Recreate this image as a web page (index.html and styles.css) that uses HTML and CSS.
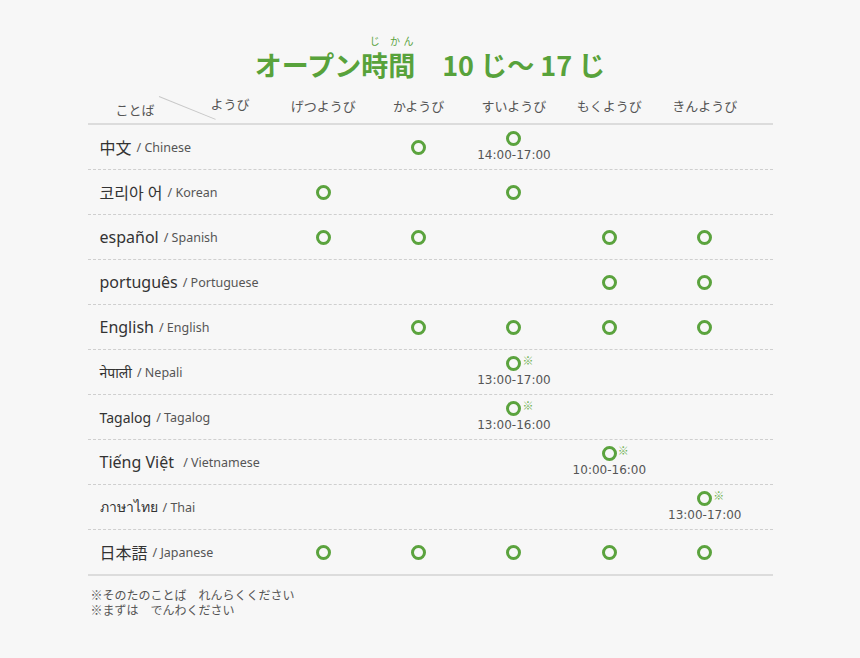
FILE: index.html
```html
<!DOCTYPE html>
<html lang="ja">
<head>
<meta charset="utf-8">
<title>オープン時間</title>
<link rel="stylesheet" href="styles.css">
</head>
<body>
<div class="page">
  <h1 class="title">オープン<ruby>時<rt>じ</rt></ruby><ruby>間<rt>かん</rt></ruby>　10 じ～ 17 じ</h1>
  <div class="table">
    <div class="row head">
      <div class="corner"><span class="c-lang">ことば</span><span class="c-line"></span><span class="c-day">ようび</span></div>
      <div class="hd">げつようび</div>
      <div class="hd">かようび</div>
      <div class="hd">すいようび</div>
      <div class="hd">もくようび</div>
      <div class="hd">きんようび</div>
    </div>

    <div class="row">
      <div class="lang"><span class="name">中文</span><span class="en">/ Chinese</span></div>
      <div class="cell"></div>
      <div class="cell"><span class="ring"></span></div>
      <div class="cell"><span class="ring"></span><span class="time">14:00-17:00</span></div>
      <div class="cell"></div>
      <div class="cell"></div>
    </div>

    <div class="row">
      <div class="lang"><span class="name">코리아 어</span><span class="en">/ Korean</span></div>
      <div class="cell"><span class="ring"></span></div>
      <div class="cell"></div>
      <div class="cell"><span class="ring"></span></div>
      <div class="cell"></div>
      <div class="cell"></div>
    </div>

    <div class="row">
      <div class="lang"><span class="name">español</span><span class="en">/ Spanish</span></div>
      <div class="cell"><span class="ring"></span></div>
      <div class="cell"><span class="ring"></span></div>
      <div class="cell"></div>
      <div class="cell"><span class="ring"></span></div>
      <div class="cell"><span class="ring"></span></div>
    </div>

    <div class="row">
      <div class="lang"><span class="name">português</span><span class="en">/ Portuguese</span></div>
      <div class="cell"></div>
      <div class="cell"></div>
      <div class="cell"></div>
      <div class="cell"><span class="ring"></span></div>
      <div class="cell"><span class="ring"></span></div>
    </div>

    <div class="row">
      <div class="lang"><span class="name">English</span><span class="en">/ English</span></div>
      <div class="cell"></div>
      <div class="cell"><span class="ring"></span></div>
      <div class="cell"><span class="ring"></span></div>
      <div class="cell"><span class="ring"></span></div>
      <div class="cell"><span class="ring"></span></div>
    </div>

    <div class="row">
      <div class="lang"><span class="name small">नेपाली</span><span class="en">/ Nepali</span></div>
      <div class="cell"></div>
      <div class="cell"></div>
      <div class="cell"><span class="ring note"></span><span class="time">13:00-17:00</span></div>
      <div class="cell"></div>
      <div class="cell"></div>
    </div>

    <div class="row">
      <div class="lang"><span class="name small">Tagalog</span><span class="en">/ Tagalog</span></div>
      <div class="cell"></div>
      <div class="cell"></div>
      <div class="cell"><span class="ring note"></span><span class="time">13:00-16:00</span></div>
      <div class="cell"></div>
      <div class="cell"></div>
    </div>

    <div class="row">
      <div class="lang"><span class="name">Tiếng Việt&nbsp;</span><span class="en">/ Vietnamese</span></div>
      <div class="cell"></div>
      <div class="cell"></div>
      <div class="cell"></div>
      <div class="cell"><span class="ring note"></span><span class="time">10:00-16:00</span></div>
      <div class="cell"></div>
    </div>

    <div class="row">
      <div class="lang"><span class="name small">ภาษาไทย</span><span class="en">/ Thai</span></div>
      <div class="cell"></div>
      <div class="cell"></div>
      <div class="cell"></div>
      <div class="cell"></div>
      <div class="cell"><span class="ring note"></span><span class="time">13:00-17:00</span></div>
    </div>

    <div class="row last">
      <div class="lang"><span class="name">日本語</span><span class="en">/ Japanese</span></div>
      <div class="cell"><span class="ring"></span></div>
      <div class="cell"><span class="ring"></span></div>
      <div class="cell"><span class="ring"></span></div>
      <div class="cell"><span class="ring"></span></div>
      <div class="cell"><span class="ring"></span></div>
    </div>
  </div>
  <div class="notes">
    <p>※そのたのことば　れんらくください</p>
    <p>※まずは　でんわください</p>
  </div>
</div>
</body>
</html>
```
FILE: styles.css
```css
html, body {
  margin: 0;
  padding: 0;
  background: #f7f7f7;
}
body {
  font-family: "Noto Sans", "Noto Sans CJK JP", sans-serif;
  color: #444;
}
.page {
  width: 685px;
  margin: 0 auto;
  padding-top: 33px;
}
.title {
  margin: 0;
  text-align: center;
  font-family: "Noto Sans CJK JP", sans-serif;
  font-size: 27px;
  font-weight: 700;
  line-height: 44px;
  color: #58a23b;
}
.title ruby {
  ruby-position: over;
}
.title rt {
  font-size: 10px;
  line-height: 10px;
  font-weight: 400;
  color: #58a23b;
  padding-bottom: 4px;
}
.table {
  margin-top: 4px;
}
.row {
  display: grid;
  grid-template-columns: 188px repeat(5, 95.4px) 1fr;
  height: 44px;
  border-bottom: 1px dashed #cfcfcf;
}
.row.head {
  height: 32px;
  border-bottom: 2px solid #dcdcdc;
}
.row.last {
  border-bottom: 2px solid #dcdcdc;
}
.corner {
  position: relative;
  font-family: "Noto Sans CJK JP", sans-serif;
  font-size: 13px;
  color: #555;
}
.c-lang {
  position: absolute;
  left: 28px;
  top: 9px;
}
.c-day {
  position: absolute;
  left: 123px;
  top: 3px;
}
.c-line {
  position: absolute;
  left: 71px;
  top: 5px;
  width: 61px;
  height: 1px;
  background: #c8c8c8;
  transform: rotate(22deg);
  transform-origin: left center;
}
.hd {
  display: flex;
  align-items: center;
  justify-content: center;
  font-family: "Noto Sans CJK JP", sans-serif;
  font-size: 13px;
  color: #555;
  padding-bottom: 3px;
}
.lang {
  display: flex;
  align-items: center;
  gap: 5px;
  padding-left: 12px;
}
.name {
  font-size: 16px;
  color: #333;
  font-family: "Noto Sans", "Noto Sans CJK JP", "Noto Sans CJK KR", sans-serif;
}
.name.small {
  font-size: 14px;
}
.en {
  font-size: 12.5px;
  color: #555;
}
.cell {
  display: flex;
  flex-direction: column;
  align-items: center;
  justify-content: center;
}
.ring {
  position: relative;
  box-sizing: border-box;
  width: 15px;
  height: 15px;
  border: 3px solid #5ba33e;
  border-radius: 50%;
}
.ring.note::after {
  content: "※";
  position: absolute;
  left: 13px;
  top: -5px;
  font-size: 11px;
  line-height: 12px;
  color: #6fb152;
  font-family: "Noto Sans CJK JP", sans-serif;
}
.time {
  margin-top: 1px;
  font-family: "DejaVu Sans", sans-serif;
  font-size: 12px;
  line-height: 17px;
  color: #555;
}
.notes {
  margin-top: 11px;
  padding-left: 3px;
  font-family: "Noto Sans CJK JP", sans-serif;
  font-size: 12px;
  line-height: 15px;
  color: #555;
}
.notes p {
  margin: 0;
}
```
